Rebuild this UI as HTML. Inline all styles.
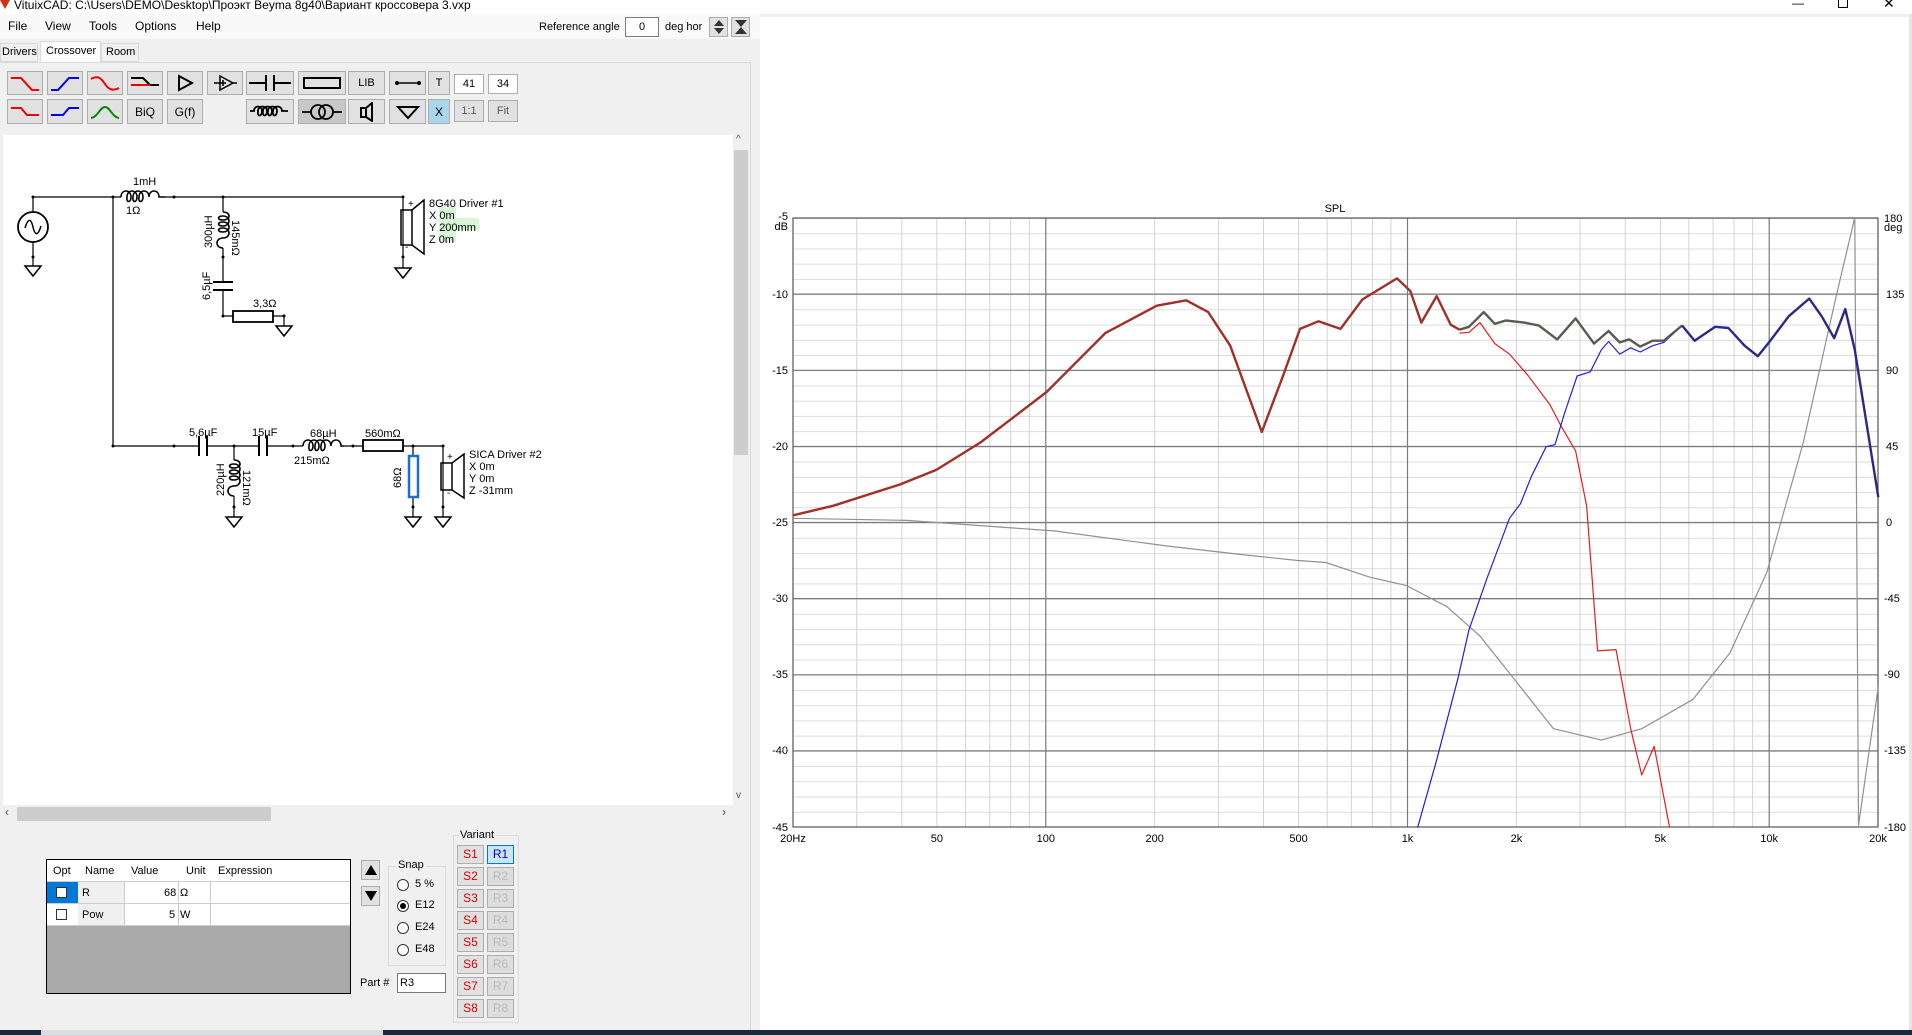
<!DOCTYPE html>
<html><head><meta charset="utf-8">
<style>
*{margin:0;padding:0;box-sizing:border-box}
body{width:1912px;height:1035px;position:relative;overflow:hidden;background:#f0f0f0;font-family:"Liberation Sans","Noto Sans CJK SC",sans-serif;font-size:12px;color:#000}
.a{position:absolute}
.btn{position:absolute;background:#e1e1e1;border:1px solid #adadad;display:flex;align-items:center;justify-content:center;font-size:12px}
.vb{position:absolute;width:27px;height:19px;border:1px solid #adadad;background:#e1e1e1;font-size:12px;text-align:center;line-height:17px}
</style></head><body>
<!-- title bar -->
<div class="a" style="left:0;top:0;width:1912px;height:14px;background:#fff"></div>
<div class="a" style="left:0;top:0;width:0;height:0;border-left:5px solid transparent;border-right:5px solid transparent;border-top:9px solid #d03010"></div>
<div class="a" style="left:14px;top:-2px;font-size:12px;color:#000">VituixCAD: C:\Users\DEMO\Desktop\Проэкт Beyma 8g40\Вариант кроссовера 3.vxp</div>
<div class="a" style="left:1792px;top:-4px;font-size:12px">—</div>
<div class="a" style="left:1838px;top:0;width:10px;height:8px;border:1px solid #000;border-top:none"></div>
<div class="a" style="left:1883px;top:-5px;font-size:14px">✕</div>
<!-- menu -->
<div class="a" style="left:0;top:14px;width:760px;height:25px;background:#f9f9f9"></div>
<div class="a" style="left:8px;top:19px">File</div>
<div class="a" style="left:45px;top:19px">View</div>
<div class="a" style="left:89px;top:19px">Tools</div>
<div class="a" style="left:135px;top:19px">Options</div>
<div class="a" style="left:196px;top:19px">Help</div>
<div class="a" style="left:539px;top:21px;font-size:11px">Reference angle</div>
<div class="a" style="left:625px;top:17px;width:34px;height:20px;background:#fff;border:1px solid #7a7a7a;text-align:center;line-height:18px;font-size:11px">0</div>
<div class="a" style="left:665px;top:21px;font-size:11px">deg hor</div>
<div class="btn" style="left:709px;top:17px;width:19px;height:20px"><svg width="14" height="16"><path d="M2 7 L7 1 L12 7Z M2 9 L7 15 L12 9Z" fill="#333"/></svg></div>
<div class="btn" style="left:731px;top:17px;width:19px;height:20px"><svg width="14" height="16"><path d="M1 1 H13 L7 8Z M1 15 H13 L7 8Z" fill="#333"/></svg></div>
<!-- tabs -->
<div class="a" style="left:0;top:43px;width:38px;height:19px;border:1px solid #d9d9d9;background:#f0f0f0;font-size:11px;line-height:17px;padding-left:1px">Drivers</div>
<div class="a" style="left:40px;top:41px;width:61px;height:22px;border:1px solid #d9d9d9;border-bottom:none;background:#fff;font-size:11px;line-height:19px;padding-left:5px">Crossover</div>
<div class="a" style="left:101px;top:43px;width:38px;height:19px;border:1px solid #d9d9d9;background:#f0f0f0;font-size:11px;line-height:17px;padding-left:4px">Room</div>
<div class="a" style="left:0;top:62px;width:751px;height:968px;border-top:1px solid #d9d9d9;border-right:1px solid #d9d9d9"></div>
<!-- toolbar row1 -->
<div class="btn" style="left:7px;top:71px;width:36px;height:24px"><svg width="30" height="18"><path d="M1 4 H11 L22 16 H29" fill="none" stroke="#e00" stroke-width="2"/></svg></div>
<div class="btn" style="left:47px;top:71px;width:36px;height:24px"><svg width="30" height="18"><path d="M1 16 H8 L19 4 H29" fill="none" stroke="#00e" stroke-width="2"/></svg></div>
<div class="btn" style="left:87px;top:71px;width:36px;height:24px"><svg width="30" height="18"><path d="M1 5 C8 1 11 4 15 10 C19 16 23 17 29 14" fill="none" stroke="#e00" stroke-width="2"/></svg></div>
<div class="btn" style="left:127px;top:71px;width:36px;height:24px"><svg width="30" height="18"><path d="M1 4 H13 L20 11 H29" fill="none" stroke="#000" stroke-width="2"/><path d="M1 11 H20" stroke="#e00" stroke-width="2"/></svg></div>
<div class="btn" style="left:167px;top:71px;width:36px;height:24px"><svg width="20" height="18"><path d="M4 2 L17 9 L4 16Z" fill="none" stroke="#000" stroke-width="2"/></svg></div>
<div class="btn" style="left:207px;top:71px;width:36px;height:24px"><svg width="26" height="18"><path d="M8 2 L21 9 L8 16Z M2 9 H8 M21 9 H25 M11 6 V12 M8 9 H14" fill="none" stroke="#000" stroke-width="1.5"/></svg></div>
<div class="btn" style="left:246px;top:71px;width:48px;height:24px"><svg width="44" height="18"><path d="M1 9 H18 M26 9 H43 M18 1 V17 M26 1 V17" fill="none" stroke="#000" stroke-width="2"/></svg></div>
<div class="btn" style="left:298px;top:71px;width:48px;height:24px"><svg width="44" height="18"><rect x="4" y="4" width="36" height="10" fill="none" stroke="#000" stroke-width="2"/></svg></div>
<div class="btn" style="left:348px;top:71px;width:37px;height:24px;font-size:11px">LIB</div>
<div class="btn" style="left:389px;top:71px;width:37px;height:24px"><svg width="30" height="18"><path d="M4 9 H26" stroke="#000" stroke-width="1.5"/><circle cx="4" cy="9" r="2"/><circle cx="26" cy="9" r="2"/></svg></div>
<div class="btn" style="left:428px;top:71px;width:22px;height:24px;font-size:11px">T</div>
<div class="btn" style="left:454px;top:74px;width:30px;height:20px;background:#fff;font-size:11px">41</div>
<div class="btn" style="left:488px;top:74px;width:30px;height:20px;background:#fff;font-size:11px">34</div>
<!-- row2 -->
<div class="btn" style="left:7px;top:99px;width:36px;height:25px"><svg width="30" height="18"><path d="M1 5 H11 L17 12 H29" fill="none" stroke="#e00" stroke-width="2"/></svg></div>
<div class="btn" style="left:47px;top:99px;width:36px;height:25px"><svg width="30" height="18"><path d="M1 12 H13 L19 5 H29" fill="none" stroke="#00e" stroke-width="2"/></svg></div>
<div class="btn" style="left:87px;top:99px;width:36px;height:25px"><svg width="30" height="18"><path d="M1 15 C8 14 10 4 15 4 C20 4 22 14 29 15" fill="none" stroke="#080" stroke-width="2"/></svg></div>
<div class="btn" style="left:127px;top:99px;width:36px;height:25px">BiQ</div>
<div class="btn" style="left:167px;top:99px;width:36px;height:25px">G(f)</div>
<div class="btn" style="left:246px;top:99px;width:48px;height:25px"><svg width="44" height="18"><path d="M2 8 H6 C6 2 14 2 14 8 C14 14 9 14 10 8 C10 2 19 2 19 8 C19 14 14 14 15 8 C15 2 24 2 24 8 C24 14 19 14 20 8 C20 2 29 2 29 8 C29 14 24 14 25 8 C25 2 34 2 34 8 H40" fill="none" stroke="#000" stroke-width="1.8"/></svg></div>
<div class="btn" style="left:298px;top:99px;width:48px;height:25px;background:#c8c8c8"><svg width="44" height="18"><circle cx="18" cy="9" r="7" fill="none" stroke="#000" stroke-width="1.8"/><circle cx="26" cy="9" r="7" fill="none" stroke="#000" stroke-width="1.8"/><path d="M2 9 H11 M33 9 H42" stroke="#000" stroke-width="1.8"/></svg></div>
<div class="btn" style="left:348px;top:99px;width:37px;height:25px"><svg width="20" height="20"><rect x="4" y="6" width="5" height="9" fill="none" stroke="#000" stroke-width="2"/><path d="M9 6 L15 1 V19 L9 15" fill="none" stroke="#000" stroke-width="2"/></svg></div>
<div class="btn" style="left:389px;top:99px;width:37px;height:25px"><svg width="24" height="18"><path d="M2 4 H22 L12 15Z" fill="none" stroke="#000" stroke-width="2"/></svg></div>
<div class="btn" style="left:428px;top:99px;width:22px;height:25px;background:#a9d6ea;font-size:12px">X</div>
<div class="btn" style="left:454px;top:100px;width:30px;height:22px;color:#555;font-size:11px">1:1</div>
<div class="btn" style="left:488px;top:100px;width:30px;height:22px;color:#555;font-size:11px">Fit</div>

<!-- schematic canvas -->
<div class="a" style="left:3px;top:135px;width:730px;height:670px;background:#fff"></div>
<div class="a" style="left:733px;top:135px;width:16px;height:670px;background:#f0f0f0"></div>
<div class="a" style="left:734px;top:150px;width:14px;height:305px;background:#cdcdcd"></div>
<div class="a" style="left:736px;top:134px;font-size:10px;color:#555">^</div>
<div class="a" style="left:736px;top:790px;font-size:10px;color:#555">v</div>
<div class="a" style="left:3px;top:805px;width:730px;height:17px;background:#f0f0f0"></div>
<div class="a" style="left:17px;top:807px;width:254px;height:14px;background:#cdcdcd"></div>
<div class="a" style="left:5px;top:805px;font-size:12px;color:#555">‹</div>
<div class="a" style="left:722px;top:805px;font-size:12px;color:#555">›</div>

<svg class="a" style="left:0;top:0" width="760" height="560" font-family="Liberation Sans, sans-serif" font-size="11">
<g fill="none" stroke="#000" stroke-width="1.2">
<path d="M33 197 H121 M165 197 H403 M33 197 V212 M33 242 V257 M113 197 V446 M223 197 V212 M223 248 V282 M223 290 V316 H233 M273 316 H284 V326 M403 197 V257 M113 446 H199 M207 446 H259 M267 446 H303 M344 446 H363 M403 446 H443 V507 M234 446 V460 M234 496 V507 M413 446 V456 M413 497 V507"/>
<path d="M33 257 V266 M403 257 V268"/>
<circle cx="33" cy="227" r="15" stroke-width="1.8"/>
<path d="M25 228 C28 218 31 218 33 227 C35 236 38 236 41 226" stroke-width="1.5"/>
<path d="M121 197 C121 189 131 189 131 197 C131 203 126 203 127 197 C127 189 137 189 137 197 C137 203 132 203 133 197 C133 189 143 189 143 197 C143 203 138 203 139 197 C139 189 149 189 149 197 C149 189 159 189 159 197 H165" stroke-width="1.6"/>
<path d="M223 212 C231 212 231 220 223 220 C217 220 217 216 223 216 C231 216 231 226 223 226 C217 226 217 222 223 222 C231 222 231 232 223 232 C217 232 217 228 223 228 C231 228 231 238 223 238 C215 238 215 248 223 248" stroke-width="1.6"/>
<path d="M234 460 C242 460 242 468 234 468 C228 468 228 464 234 464 C242 464 242 474 234 474 C228 474 228 470 234 470 C242 470 242 480 234 480 C228 480 228 476 234 476 C242 476 242 486 234 486 C226 486 226 496 234 496" stroke-width="1.6"/>
<path d="M303 446 C303 438 313 438 313 446 C313 452 308 452 309 446 C309 438 319 438 319 446 C319 452 314 452 315 446 C315 438 325 438 325 446 C325 452 320 452 321 446 C321 438 331 438 331 446 C331 438 341 438 341 446 H344" stroke-width="1.6"/>
<path d="M213 282 H233 M213 290 H233 M199 436 V456 M207 436 V456 M259 436 V456 M267 436 V456" stroke-width="2"/>
<rect x="233" y="311" width="40" height="11" stroke-width="1.8"/>
<rect x="363" y="440" width="40" height="11" stroke-width="1.8"/>
<rect x="409" y="456" width="9" height="41" stroke="#1a6fd0" stroke-width="2.5"/>
<rect x="401" y="210" width="11" height="35" stroke-width="1.5"/>
<path d="M412 210 L424 200 V254 L412 245" stroke-width="1.5"/>
<rect x="441" y="463" width="11" height="27" stroke-width="1.5"/>
<path d="M452 463 L464 454 V498 L452 490" stroke-width="1.5"/>
<path d="M25 266 H41 L33 276Z M395 268 H411 L403 278Z M276 326 H292 L284 336Z M226 517 H242 L234 527Z M405 517 H421 L413 527Z M435 517 H451 L443 527Z" stroke-width="1.5"/>
<path d="M234 507 V517 M413 507 V517 M443 507 V517"/>
</g>
<g fill="#000"><circle cx="33" cy="197" r="1.5"/><circle cx="113" cy="197" r="1.5"/><circle cx="174" cy="197" r="1.5"/><circle cx="223" cy="197" r="1.5"/><circle cx="403" cy="197" r="1.5"/><circle cx="33" cy="257" r="1.5"/><circle cx="223" cy="257" r="1.5"/><circle cx="223" cy="316" r="1.5"/><circle cx="284" cy="316" r="1.5"/><circle cx="403" cy="257" r="1.5"/><circle cx="113" cy="446" r="1.5"/><circle cx="174" cy="446" r="1.5"/><circle cx="234" cy="446" r="1.5"/><circle cx="293" cy="446" r="1.5"/><circle cx="353" cy="446" r="1.5"/><circle cx="413" cy="446" r="1.5"/><circle cx="443" cy="446" r="1.5"/><circle cx="234" cy="507" r="1.5"/><circle cx="413" cy="507" r="1.5"/><circle cx="443" cy="507" r="1.5"/></g>
<rect x="439" y="206" width="17" height="12" fill="#d8f5d8"/><rect x="439" y="218" width="40" height="12" fill="#d8f5d8"/><rect x="439" y="230" width="17" height="12" fill="#d8f5d8"/>
<text x="133" y="185">1mH</text><text x="126" y="214">1Ω</text>
<text x="253" y="307">3,3Ω</text>
<text transform="translate(212,248) rotate(-90)">300µH</text>
<text transform="translate(232,220) rotate(90)">145mΩ</text>
<text transform="translate(210,300) rotate(-90)">6,5µF</text>
<text x="429" y="207">8G40 Driver #1</text>
<text x="429" y="219">X 0m</text><text x="429" y="231">Y 200mm</text><text x="429" y="243">Z 0m</text>
<text x="408" y="207" font-size="10">+</text><text x="405" y="250" font-size="10">-</text>
<text x="189" y="436">5,6µF</text><text x="252" y="436">15µF</text>
<text x="310" y="437">68µH</text><text x="294" y="464">215mΩ</text>
<text x="365" y="437">560mΩ</text>
<text transform="translate(224,496) rotate(-90)">220µH</text>
<text transform="translate(243,470) rotate(90)">121mΩ</text>
<text transform="translate(401,488) rotate(-90)">68Ω</text>
<text x="469" y="458">SICA Driver #2</text>
<text x="469" y="470">X 0m</text><text x="469" y="482">Y 0m</text><text x="469" y="494">Z -31mm</text>
<text x="447" y="460" font-size="10">+</text><text x="447" y="496" font-size="10">-</text>
</svg>

<!-- properties table -->
<div class="a" style="left:46px;top:859px;width:305px;height:135px;border:1px solid #000;background:#aaa"></div>
<div class="a" style="left:47px;top:860px;width:303px;height:22px;background:#fff;border-bottom:1px solid #ccc;font-size:11px">
<span class="a" style="left:6px;top:5px">Opt</span><span class="a" style="left:38px;top:5px">Name</span><span class="a" style="left:84px;top:5px">Value</span><span class="a" style="left:139px;top:5px">Unit</span><span class="a" style="left:171px;top:5px">Expression</span></div>
<div class="a" style="left:47px;top:882px;width:303px;height:44px;background:#fff;font-size:11px">
<div class="a" style="left:0;top:0;width:31px;height:22px;background:#0078d7"></div>
<div class="a" style="left:9px;top:5px;width:11px;height:11px;background:#fff;border:1px solid #333"></div>
<div class="a" style="left:9px;top:27px;width:11px;height:11px;background:#fff;border:1px solid #333"></div>
<div class="a" style="left:31px;top:0;width:46px;height:44px;background:#f0f0f0"></div>
<span class="a" style="left:35px;top:5px">R</span><span class="a" style="left:35px;top:27px">Pow</span>
<span class="a" style="left:117px;top:5px">68</span><span class="a" style="left:122px;top:27px">5</span>
<span class="a" style="left:133px;top:5px">Ω</span><span class="a" style="left:133px;top:27px">W</span>
<div class="a" style="left:0;top:21px;width:303px;height:1px;background:#ccc"></div>
<div class="a" style="left:0;top:43px;width:303px;height:1px;background:#ccc"></div>
<div class="a" style="left:77px;top:0;width:1px;height:44px;background:#ccc"></div>
<div class="a" style="left:131px;top:0;width:1px;height:44px;background:#ccc"></div>
<div class="a" style="left:163px;top:0;width:1px;height:44px;background:#ccc"></div>
</div>
<div class="btn" style="left:361px;top:860px;width:19px;height:20px"><svg width="14" height="12"><path d="M1 11 L7 1 L13 11Z"/></svg></div>
<div class="btn" style="left:361px;top:886px;width:19px;height:20px"><svg width="14" height="12"><path d="M1 1 L7 11 L13 1Z"/></svg></div>
<div class="a" style="left:388px;top:866px;width:58px;height:100px;border:1px solid #dcdcdc"></div>
<div class="a" style="left:396px;top:859px;background:#f0f0f0;font-size:11px;padding:0 2px">Snap</div>
<div class="a" style="left:397px;top:879px;width:12px;height:12px;border:1px solid #333;border-radius:50%;background:#fff"></div><span class="a" style="left:415px;top:878px;font-size:11px">5 %</span>
<div class="a" style="left:397px;top:900px;width:12px;height:12px;border:1px solid #333;border-radius:50%;background:#fff"><div style="margin:2px;width:6px;height:6px;border-radius:50%;background:#000"></div></div><span class="a" style="left:415px;top:899px;font-size:11px">E12</span>
<div class="a" style="left:397px;top:922px;width:12px;height:12px;border:1px solid #333;border-radius:50%;background:#fff"></div><span class="a" style="left:415px;top:921px;font-size:11px">E24</span>
<div class="a" style="left:397px;top:944px;width:12px;height:12px;border:1px solid #333;border-radius:50%;background:#fff"></div><span class="a" style="left:415px;top:943px;font-size:11px">E48</span>
<span class="a" style="left:360px;top:977px;font-size:11px">Part #</span>
<div class="a" style="left:397px;top:973px;width:49px;height:20px;background:#fff;border:1px solid #7a7a7a;font-size:11px;padding:3px 2px">R3</div>
<div class="a" style="left:453px;top:835px;width:66px;height:188px;border:1px solid #dcdcdc"></div>
<div class="a" style="left:459px;top:829px;background:#f0f0f0;font-size:11px;padding:0 1px">Variant</div>
<div class="vb" style="left:457px;top:845px;color:#d00">S1</div><div class="vb" style="left:487px;top:845px;color:#00c;background:#cce4f7;border-color:#0078d7">R1</div>
<div class="vb" style="left:457px;top:867px;color:#d00">S2</div><div class="vb" style="left:487px;top:867px;color:#bbb;background:#ddd">R2</div>
<div class="vb" style="left:457px;top:889px;color:#d00">S3</div><div class="vb" style="left:487px;top:889px;color:#bbb;background:#ddd">R3</div>
<div class="vb" style="left:457px;top:911px;color:#d00">S4</div><div class="vb" style="left:487px;top:911px;color:#bbb;background:#ddd">R4</div>
<div class="vb" style="left:457px;top:933px;color:#d00">S5</div><div class="vb" style="left:487px;top:933px;color:#bbb;background:#ddd">R5</div>
<div class="vb" style="left:457px;top:955px;color:#d00">S6</div><div class="vb" style="left:487px;top:955px;color:#bbb;background:#ddd">R6</div>
<div class="vb" style="left:457px;top:977px;color:#d00">S7</div><div class="vb" style="left:487px;top:977px;color:#bbb;background:#ddd">R7</div>
<div class="vb" style="left:457px;top:999px;color:#d00">S8</div><div class="vb" style="left:487px;top:999px;color:#bbb;background:#ddd">R8</div>

<!-- right pane -->
<div class="a" style="left:760px;top:17px;width:1149px;height:1013px;background:#fff"></div>
<div class="a" style="left:1909px;top:14px;width:3px;height:1016px;background:#e6e6e6"></div>
<!-- taskbar -->
<div class="a" style="left:0;top:1030px;width:1912px;height:5px;background:#1b2a3a"></div>
<div class="a" style="left:41px;top:1030px;width:342px;height:5px;background:#d8dde2"></div>

<svg class="a" style="left:0;top:0" width="1912" height="1035" font-family="Liberation Sans, sans-serif" font-size="11">
<defs><pattern id="hp" x="0" y="218" width="10" height="15.225" patternUnits="userSpaceOnUse"><rect x="0" y="0" width="10" height="1" fill="#dcdcdc"/></pattern></defs>
<rect x="793" y="218" width="1085" height="609" fill="url(#hp)"/>
<g stroke="#d4d4d4" stroke-width="1">
<path d="M856.7 218V827M901.9 218V827M936.9 218V827M965.6 218V827M989.8 218V827M1010.7 218V827M1029.3 218V827M1154.7 218V827M1218.4 218V827M1263.5 218V827M1298.6 218V827M1327.2 218V827M1351.4 218V827M1372.4 218V827M1390.9 218V827M1516.4 218V827M1580.1 218V827M1625.2 218V827M1660.3 218V827M1688.9 218V827M1713.1 218V827M1734.1 218V827M1752.6 218V827"/>
</g>
<g stroke="#7a7a7a" stroke-width="1.2">
<path d="M1045.8 218V827M1407.5 218V827M1769.2 218V827M793 294.1H1878M793 370.3H1878M793 446.5H1878M793 522.5H1878M793 598.6H1878M793 674.8H1878M793 750.9H1878"/>
</g>
<rect x="793" y="218" width="1085" height="609" fill="none" stroke="#555" stroke-width="1.2"/>
<g fill="none" stroke-linejoin="round">
<polyline stroke="#909090" stroke-width="1.2" points="793.1,518.3 907,520.4 1053.9,530.9 1164.1,545.6 1237.6,554.1 1296.4,560.4 1325.8,562.5 1369.8,577.2 1406.6,585.6 1447,606.7 1480,636.1 1516.8,682.4 1553.5,728.7 1601.3,740.1 1641.7,728.7 1693.1,699.3 1729.9,653 1766.6,573 1803.3,442.5 1836.4,295.2 1854.8,217.4 1858.5,825.5 1878.3,686.6"/>
<polyline stroke="#e02020" stroke-width="1.2" points="1459.5,333.1 1469,332.3 1480,322.6 1494.8,343.6 1509.5,354.1 1527.8,375.2 1549.9,404.6 1560.9,425.7 1575.6,450.9 1586.6,505.7 1597.6,650.9 1616,649.6 1630.7,728.7 1641.7,775 1654.2,746.4 1669.6,827.6"/>
<polyline stroke="#2020e0" stroke-width="1.2" points="1417.6,827.6 1436,762.4 1458,678.2 1469,629.8 1487.4,577.2 1509.5,518.3 1520.5,503.6 1531.5,476.2 1546.2,446.7 1555,444.6 1564.6,413.1 1577.1,376 1590.3,371.8 1601.3,349.9 1608.6,341.5 1619.7,354.1 1630.7,347.8 1640.2,352 1652.7,345.7 1663.8,342.4 1682.1,325.5"/>
<polyline stroke="#a03028" stroke-width="2.4" points="793.1,515.3 833.5,505.7 899.6,484.6 936.3,469.9 980.4,442.5 1046.6,392 1105.3,333.1 1156.8,305.7 1186.2,300.3 1208.2,312.1 1230.2,345.7 1261.8,432 1281.7,379.4 1300,328.9 1318.4,321.3 1340.5,328.9 1362.5,299.4 1384.5,286 1397,278.4 1410.3,291 1421.3,322.6 1436.7,296.1 1450.7,324.7 1459.5,329.7"/>
<polyline stroke="#5a5a50" stroke-width="2.4" points="1459.5,329.7 1469,326.8 1483.7,312.1 1494.8,323.8 1505.8,320.5 1524.1,322.6 1538.8,325.5 1557.2,339.4 1575.6,318.4 1594,343.6 1608.6,331 1619.7,342.4 1629.2,339.4 1640.2,346.6 1652.7,340.7 1663.8,340.7 1682.1,325.5"/>
<polyline stroke="#2a2a85" stroke-width="2.4" points="1682.1,325.5 1694.6,340.7 1715.2,326.8 1728.4,328 1744.6,345.7 1757.8,356.2 1770.3,340.7 1788.7,316.3 1809.2,298.6 1821.7,316.3 1834.2,338.1 1845.3,309.1 1854.8,349.9 1878.3,497.2"/>
</g>
<g fill="#000">
<text x="1335" y="212" text-anchor="middle">SPL</text>
<text x="788" y="220" text-anchor="end">-5</text><text x="788" y="230" text-anchor="end">dB</text>
<text x="788" y="298" text-anchor="end">-10</text><text x="788" y="374" text-anchor="end">-15</text><text x="788" y="450" text-anchor="end">-20</text><text x="788" y="526" text-anchor="end">-25</text><text x="788" y="602" text-anchor="end">-30</text><text x="788" y="678" text-anchor="end">-35</text><text x="788" y="754" text-anchor="end">-40</text><text x="788" y="831" text-anchor="end">-45</text>
<text x="1884" y="222">180</text><text x="1884" y="231">deg</text>
<text x="1886" y="298">135</text><text x="1886" y="374">90</text><text x="1886" y="450">45</text><text x="1886" y="526">0</text><text x="1884" y="602">-45</text><text x="1884" y="678">-90</text><text x="1884" y="754">-135</text><text x="1884" y="831">-180</text>
<text x="793" y="842" text-anchor="middle">20Hz</text><text x="936.9" y="842" text-anchor="middle">50</text><text x="1045.8" y="842" text-anchor="middle">100</text><text x="1154.7" y="842" text-anchor="middle">200</text><text x="1298.6" y="842" text-anchor="middle">500</text><text x="1407.5" y="842" text-anchor="middle">1k</text><text x="1516.4" y="842" text-anchor="middle">2k</text><text x="1660.3" y="842" text-anchor="middle">5k</text><text x="1769.2" y="842" text-anchor="middle">10k</text><text x="1878" y="842" text-anchor="middle">20k</text>
</g>
</svg>
</body></html>
